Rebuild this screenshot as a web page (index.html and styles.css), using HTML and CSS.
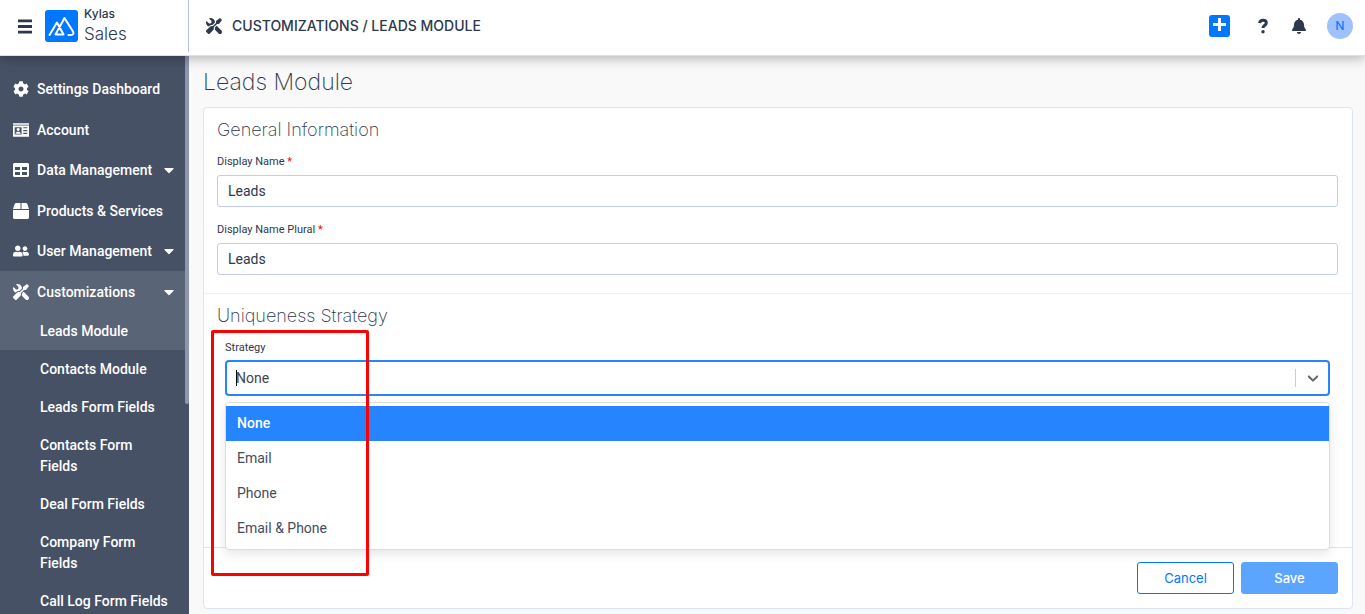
FILE: index.html
```html
<!DOCTYPE html>
<html lang="en">
<head>
    <meta charset="UTF-8">
    <title>Leads Module</title>
    <link rel="stylesheet" href="styles.css">
</head>
<body>
<!-- icon shapes used more than once -->
<svg class="sprite" aria-hidden="true">
    <symbol id="tools" viewBox="0 0 512 512"><path transform="matrix(-1 0 0 1 512 0)" d="M501.1 395.7L384 278.6c-23.1-23.1-57.6-27.6-85.4-13.9L192 158.1V96L64 0 0 64l96 128h62.1l106.6 106.6c-13.6 27.8-9.2 62.3 13.9 85.4l117.1 117.1c14.6 14.6 38.2 14.6 52.7 0l52.7-52.7c14.5-14.6 14.5-38.2 0-52.7zM331.7 225c28.3 0 54.9 11 74.9 31l19.4 19.4c15.8-6.9 30.8-16.5 43.8-29.5 37.1-37.1 49.7-89.3 37.9-136.7-2.2-9-13.5-12.1-20.1-5.5l-74.4 74.4-67.9-11.3L334 98.9l74.4-74.4c6.6-6.6 3.4-17.9-5.7-20.2-47.4-11.7-99.6.9-136.6 37.9-28.5 28.5-41.9 66.1-41.2 103.6l82.1 82.1c8.1-1.9 16.5-2.9 24.7-2.9zm-103.9 82l-56.7-56.7L18.7 402.8c-25 25-25 65.5 0 90.5s65.5 25 90.5 0l123.6-123.6c-7.6-19.9-9.9-41.6-5-62.7z"/></symbol>
    <symbol id="caret" viewBox="0 0 320 512"><path d="M31.3 192h257.3c17.8 0 26.7 21.5 14.1 34.1L174.1 354.8c-7.8 7.8-20.5 7.8-28.3 0L17.2 226.1C4.6 213.5 13.5 192 31.3 192z"/></symbol>
</svg>

<header class="header">
    <div class="brand">
        <button class="icon-btn" type="button" aria-label="Menu">
            <svg class="bars" viewBox="0 0 15 15"><path d="M0 0h15v3H0zM0 6h15v3H0zM0 12h15v3H0z"/></svg>
        </button>
        <svg class="logo" viewBox="0 0 33 32">
            <rect width="33" height="32" rx="3"/>
            <path d="M4.500 25L12 12.500 18.500 24.500H10.500L19.500 8 28 21.500Q29.500 25 26 25H23.500"/>
        </svg>
        <div class="brand-name">
            <span class="brand-top">Kylas</span>
            <span class="brand-app">Sales</span>
        </div>
    </div>
    <div class="crumb">
        <svg class="icon"><use href="#tools"/></svg>
        <span>CUSTOMIZATIONS / LEADS MODULE</span>
    </div>
    <div class="actions">
        <button class="add-btn" type="button" aria-label="Add">
            <svg viewBox="0 0 15 16"><path d="M6 0h3v5h5v3H9v5H6V8H1V5h5z"/></svg>
        </button>
        <button class="icon-btn" type="button" aria-label="Help">
            <svg class="icon" viewBox="0 0 16 16"><path class="hook" d="M4.500 5C5 2.800 6.500 2.200 8 2.200c2 0 3.300 1.100 3.300 2.700C11.300 7.200 8 7.300 8 10"/><circle cx="8" cy="13.700" r="1.700"/></svg>
        </button>
        <button class="icon-btn" type="button" aria-label="Notifications">
            <svg class="icon" viewBox="0 0 448 512"><path d="M224 512c35.320 0 63.970-28.650 63.970-64H160.030c0 35.350 28.650 64 63.970 64zm215.390-149.710c-19.320-20.760-55.470-51.990-55.470-154.290 0-77.700-54.480-139.900-127.940-155.160V32c0-17.670-14.320-32-31.980-32s-31.980 14.330-31.980 32v20.840C118.560 68.100 64.080 130.300 64.080 208c0 102.300-36.150 133.530-55.470 154.290-6 6.450-8.660 14.160-8.610 21.710.110 16.400 12.980 32 32.100 32h383.800c19.120 0 32-15.600 32.100-32 .050-7.550-2.610-15.270-8.610-21.710z"/></svg>
        </button>
        <button class="avatar" type="button">N</button>
    </div>
</header>

<div class="page">
    <nav class="sidebar">
        <ul class="menu">
            <li><a class="menu-link" href="#">
                <svg class="icon" viewBox="0 0 512 512"><path d="M487.400 315.700l-42.600-24.600c4.300-23.200 4.300-47 0-70.200l42.600-24.600c4.900-2.800 7.100-8.600 5.500-14-11.100-35.600-30-67.800-54.700-94.600-3.800-4.100-10-5.100-14.800-2.300L380.800 110c-17.900-15.400-38.500-27.300-60.800-35.100V25.800c0-5.600-3.900-10.500-9.400-11.700-36.700-8.200-74.300-7.800-109.200 0-5.500 1.200-9.400 6.100-9.400 11.700V75c-22.200 7.900-42.800 19.800-60.800 35.100L88.700 85.500c-4.900-2.800-11-1.900-14.800 2.300-24.700 26.700-43.600 58.900-54.700 94.600-1.700 5.400.6 11.200 5.500 14L67.300 221c-4.300 23.200-4.300 47 0 70.200l-42.600 24.600c-4.900 2.800-7.100 8.600-5.500 14 11.100 35.600 30 67.800 54.700 94.600 3.800 4.100 10 5.100 14.800 2.300l42.600-24.600c17.900 15.400 38.500 27.300 60.800 35.100v49.200c0 5.600 3.900 10.500 9.400 11.700 36.700 8.200 74.300 7.800 109.200 0 5.500-1.200 9.400-6.100 9.400-11.700v-49.200c22.200-7.900 42.800-19.800 60.800-35.100l42.600 24.600c4.900 2.800 11 1.900 14.800-2.300 24.700-26.700 43.600-58.900 54.700-94.600 1.500-5.500-.7-11.300-5.600-14.100zM256 336c-44.100 0-80-35.900-80-80s35.900-80 80-80 80 35.900 80 80-35.900 80-80 80z"/></svg>
                Settings Dashboard</a></li>
            <li><a class="menu-link" href="#">
                <svg class="icon" viewBox="0 0 14 14"><path fill-rule="evenodd" d="M0 1h14v1.500H0zM0 3h14v10H0zM1.500 4.500v6.500h6V4.500zM9 4.500v1h3.500v-1zM9 7v1h3.500V7zM9 9.500v1h3.500v-1z"/><circle cx="4.500" cy="6.500" r="1.300"/><path d="M2.300 10.200c0-2.300 4.400-2.300 4.400 0z"/></svg>
                Account</a></li>
            <li><a class="menu-link has-children" href="#">
                <svg class="icon" viewBox="0 0 512 512"><path d="M464 32H48C21.490 32 0 53.490 0 80v352c0 26.510 21.490 48 48 48h416c26.510 0 48-21.490 48-48V80c0-26.510-21.490-48-48-48zM224 416H64v-96h160v96zm0-160H64v-96h160v96zm224 160H288v-96h160v96zm0-160H288v-96h160v96z"/></svg>
                Data Management<svg class="caret"><use href="#caret"/></svg></a></li>
            <li><a class="menu-link" href="#">
                <svg class="icon" viewBox="0 0 512 512"><path d="M509.500 184.600L458.900 32.800C452.400 13.200 434.100 0 413.400 0H272v192h238.700c-.4-2.500-.4-5-1.200-7.400zM240 0H98.600c-20.700 0-39 13.200-45.500 32.800L2.500 184.600c-.8 2.400-.8 4.900-1.200 7.400H240V0zM0 224v240c0 26.500 21.500 48 48 48h416c26.500 0 48-21.500 48-48V224H0z"/></svg>
                Products &amp; Services</a></li>
            <li><a class="menu-link has-children" href="#">
                <svg class="icon" viewBox="0 0 640 512"><path d="M192 256c61.900 0 112-50.100 112-112S253.900 32 192 32 80 82.100 80 144s50.100 112 112 112zm76.800 32h-8.300c-20.800 10-43.900 16-68.500 16s-47.600-6-68.500-16h-8.300C51.600 288 0 339.600 0 403.200V432c0 26.500 21.500 48 48 48h288c26.500 0 48-21.500 48-48v-28.800c0-63.600-51.600-115.200-115.200-115.200zM480 256c53 0 96-43 96-96s-43-96-96-96-96 43-96 96 43 96 96 96zm48 32h-3.800c-13.900 4.800-28.600 8-44.200 8s-30.300-3.200-44.200-8H432c-20.400 0-39.200 5.900-55.700 15.400 24.400 26.300 39.700 61.200 39.700 99.800v38.400c0 2.200-.5 4.300-.6 6.400H592c26.500 0 48-21.500 48-48 0-61.900-50.100-112-112-112z"/></svg>
                User Management<svg class="caret"><use href="#caret"/></svg></a></li>
            <li>
                <a class="menu-link current" href="#">
                    <svg class="icon"><use href="#tools"/></svg>
                    Customizations<svg class="caret"><use href="#caret"/></svg></a>
                <ul class="submenu">
                    <li><a class="current" href="#">Leads Module</a></li>
                    <li><a href="#">Contacts Module</a></li>
                    <li><a href="#">Leads Form Fields</a></li>
                    <li><a href="#">Contacts Form Fields</a></li>
                    <li><a href="#">Deal Form Fields</a></li>
                    <li><a href="#">Company Form Fields</a></li>
                    <li><a href="#">Call Log Form Fields</a></li>
                </ul>
            </li>
        </ul>
        <span class="scroll-thumb"></span>
    </nav>

    <main class="content">
        <h1>Leads Module</h1>
        <form class="card">
            <section class="general">
                <h2>General Information</h2>
                <label class="label" for="name">Display Name <span class="required">*</span></label>
                <input class="input" id="name" type="text" value="Leads">
                <label class="label" for="plural">Display Name Plural <span class="required">*</span></label>
                <input class="input" id="plural" type="text" value="Leads">
            </section>
            <section class="uniqueness">
                <h2>Uniqueness Strategy</h2>
                <div class="strategy">
                    <label class="label" for="strategy">Strategy</label>
                    <div class="select-box">
                        <select class="select" id="strategy">
                            <option>None</option>
                            <option>Email</option>
                            <option>Phone</option>
                            <option>Email &amp; Phone</option>
                        </select>
                        <span class="text-cursor"></span>
                        <svg class="chevron" viewBox="0 0 20 20"><path d="M4.516 7.548c.436-.446 1.043-.481 1.576 0L10 11.295l3.908-3.747c.533-.481 1.141-.446 1.574 0 .436.445.408 1.197 0 1.615-.406.418-4.695 4.502-4.695 4.502a1.095 1.095 0 0 1-1.576 0S4.924 9.581 4.516 9.163s-.436-1.170 0-1.615z"/></svg>
                        <ul class="options" role="listbox">
                            <li class="selected" role="option" aria-selected="true">None</li>
                            <li role="option">Email</li>
                            <li role="option">Phone</li>
                            <li role="option">Email &amp; Phone</li>
                        </ul>
                    </div>
                    <span class="highlight"></span>
                </div>
            </section>
            <div class="footer">
                <button class="btn" type="button">Cancel</button>
                <button class="btn btn-primary" type="submit">Save</button>
            </div>
        </form>
    </main>
</div>
</body>
</html>
```

FILE: styles.css
```css
* {
    box-sizing: border-box;
    margin: 0;
    padding: 0;
}
body {
    display: flex;
    flex-direction: column;
    height: 100vh;
    overflow: hidden;
    font: 14px/20px Roboto, "Liberation Sans", sans-serif;
    color: #2e384d;
    background: #f9f9f9;
}
ul {
    list-style: none;
}
a {
    color: inherit;
    text-decoration: none;
}
button, input, select {
    font: inherit;
    color: inherit;
}
button {
    border: 0;
    background: none;
    cursor: pointer;
}
svg {
    display: block;
    fill: currentColor;
}
.sprite {
    position: absolute;
    width: 0;
    height: 0;
}
.icon {
    flex: none;
    width: 16px;
    height: 16px;
}

/* header */
.header {
    position: relative;
    z-index: 2;
    flex: none;
    display: flex;
    align-items: center;
    height: 56px;
    padding-right: 12px;
    padding-bottom: 3px;
    border-bottom: 1px solid #dcdfee;
    background: #fff;
    box-shadow: 0 2px 12px rgba(0, 0, 0, .3);
}
.brand {
    display: flex;
    align-items: center;
    width: 189px;
    height: 100%;
    padding-left: 18px;
    border-right: 1px solid #b9c1db;
}
.bars {
    width: 14px;
    height: 15px;
}
.logo {
    width: 33px;
    height: 32px;
    margin: 0 6px 0 13px;
    fill: #0077ff;
}
.logo path {
    fill: none;
    stroke: #fff;
    stroke-width: 2;
    stroke-linecap: round;
    stroke-linejoin: round;
}
.brand-name {
    display: flex;
    flex-direction: column;
    padding-bottom: 4px;
}
.brand-top {
    font: 500 12px/20px Inter, sans-serif;
}
.brand-app {
    font: 300 17px/20px Inter, sans-serif;
}
.crumb {
    display: flex;
    align-items: center;
    gap: 10px;
    padding-left: 17px;
    font: 500 14px/20px Inter, sans-serif;
}
.actions {
    display: flex;
    align-items: center;
    gap: 20px;
    margin-left: auto;
}
.add-btn {
    width: 21px;
    height: 22px;
    margin-right: 5px;
    padding: 3px;
    border-radius: 3px;
    color: #fff;
    background: #0077ff;
}
.hook {
    fill: none;
    stroke: currentColor;
    stroke-width: 3;
}
.avatar {
    width: 26px;
    height: 26px;
    border-radius: 50%;
    color: #0077ff;
    font-size: 13px;
    background: #9fc2ff;
}

/* sidebar */
.page {
    flex: 1;
    display: flex;
    min-height: 0;
}
.sidebar {
    position: relative;
    flex: none;
    width: 189px;
    padding-top: 12px;
    overflow: hidden;
    color: #fff;
    font-weight: 500;
    background: #475166;
}
.menu-link {
    display: flex;
    align-items: center;
    gap: 8px;
    height: 41px;
    padding: 0 15px 0 13px;
}
.menu-link.has-children {
    height: 40px;
}
.caret {
    width: 10px;
    height: 16px;
    margin-left: auto;
}
.current {
    background: #5a6477;
}
.submenu a {
    display: block;
    padding: 9px 20px 8px 40px;
    line-height: 21px;
}
.scroll-thumb {
    position: absolute;
    top: 0;
    right: 0;
    width: 4px;
    height: 348px;
    border-radius: 0 0 2px 2px;
    background: #8d96ab;
}

/* content */
.content {
    flex: 1;
    padding: 10px 12px 0 14px;
    overflow: hidden;
}
h1 {
    font: 200 23px/32px Inter, sans-serif;
}
h2 {
    font: 200 18px/24px Inter, sans-serif;
}
.card {
    margin-top: 9px;
    border: 1px solid #dfe3f8;
    border-radius: 4px;
    background: #fff;
}
.general {
    padding: 10px 14px 18px 13px;
    border-bottom: 1px solid #eff1fb;
}
.label {
    display: block;
    font-size: 11px;
    line-height: 16px;
    margin: 12px 0 5px;
}
.required {
    color: #f00;
}
.input {
    display: block;
    width: 100%;
    height: 32px;
    padding: 0 10px;
    border: 1px solid #c2cbf0;
    border-radius: 3px;
    background: #fff;
}
.input + .label {
    margin-top: 15px;
}
.uniqueness {
    min-height: 253px;
    padding: 10px 14px 0 13px;
}
.strategy {
    position: relative;
    padding: 0 8px;
}
.strategy .label {
    margin-bottom: 4px;
}
.select-box {
    position: relative;
}
.select {
    display: block;
    width: 100%;
    height: 36px;
    padding: 0 9px;
    appearance: none;
    border: 2px solid #2684ff;
    border-radius: 4px;
    outline: 0;
    color: #444;
    background: #fff;
}
.text-cursor {
    position: absolute;
    top: 10px;
    left: 11px;
    width: 1px;
    height: 16px;
    background: #000;
}
.chevron {
    position: absolute;
    top: 9px;
    right: 0;
    width: 35px;
    height: 18px;
    border-left: 1px solid #ccc;
    color: #666;
}
.options {
    position: absolute;
    z-index: 1;
    top: 42px;
    left: 0;
    right: 0;
    padding: 3px 0;
    border: 1px solid #ddd;
    border-radius: 4px;
    color: #434c5f;
    background: #fff;
    box-shadow: 0 4px 11px rgba(0, 0, 0, .1);
}
.options li {
    padding: 7px 11px 8px;
}
.options .selected {
    color: #fff;
    font-weight: 500;
    background: #2684ff;
}
.highlight {
    position: absolute;
    z-index: 2;
    top: -10px;
    left: -6px;
    width: 158px;
    height: 246px;
    border: 3px solid #f00;
    border-radius: 2px;
    pointer-events: none;
}
.footer {
    display: flex;
    justify-content: flex-end;
    gap: 7px;
    padding: 14px;
    border-top: 1px solid #dfe3f8;
}
.btn {
    width: 97px;
    height: 32px;
    border: 1px solid #0077ff;
    border-radius: 3px;
    color: #0077ff;
    font-family: Inter, sans-serif;
    font-size: 13px;
}
.btn-primary {
    border-color: #5ca5ff;
    color: #fff;
    font-weight: 500;
    background: #5ca5ff;
}
```
